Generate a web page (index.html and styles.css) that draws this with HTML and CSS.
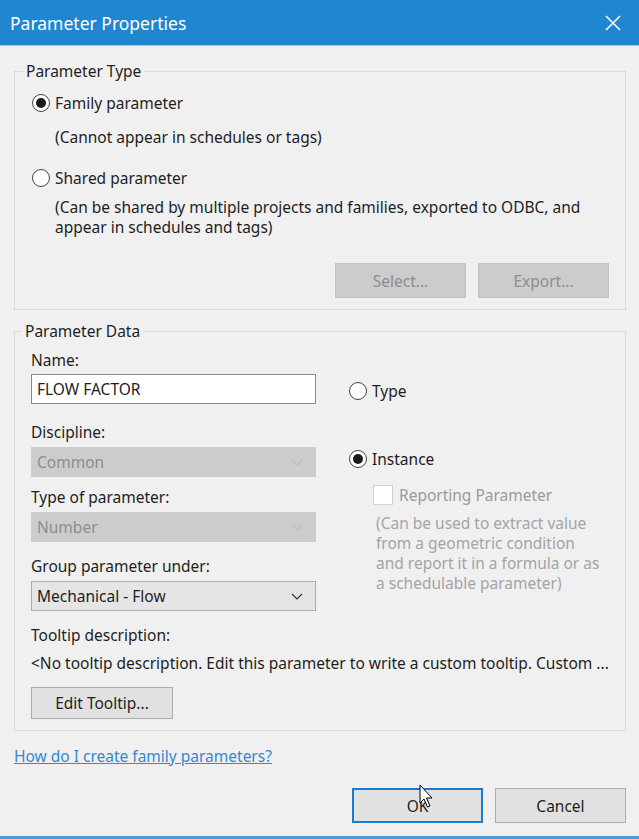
FILE: index.html
```html
<!DOCTYPE html>
<html lang="en">
<head>
<meta charset="UTF-8">
<title>Parameter Properties</title>
<link rel="stylesheet" href="styles.css">
</head>
<body>
<div class="dialog">
    <div class="titlebar">
        <span class="title">Parameter Properties</span>
        <svg class="close" width="18" height="18" viewBox="0 0 18 18">
            <path d="M2 2 L16 16 M16 2 L2 16" stroke="#fff" stroke-width="1.6" fill="none"/>
        </svg>
    </div>

    <div class="content">
        <fieldset class="group type-group">
            <legend>Parameter Type</legend>
            <div class="radio-row">
                <span class="radio checked"></span>
                <span>Family parameter</span>
            </div>
            <p class="hint hint-family">(Cannot appear in schedules or tags)</p>
            <div class="radio-row shared-row">
                <span class="radio"></span>
                <span>Shared parameter</span>
            </div>
            <p class="hint hint-shared">(Can be shared by multiple projects and families, exported to ODBC, and<br>appear in schedules and tags)</p>
            <div class="btn-row">
                <button class="btn disabled">Select...</button>
                <button class="btn disabled">Export...</button>
            </div>
        </fieldset>

        <fieldset class="group data-group">
            <legend>Parameter Data</legend>
            <div class="data-cols">
                <div class="left-col">
                    <div class="field-label name-label">Name:</div>
                    <div class="textbox">FLOW FACTOR</div>

                    <div class="field-label discipline-label">Discipline:</div>
                    <div class="combo disabled">
                        <span>Common</span>
                        <svg width="12" height="7" viewBox="0 0 12 7"><path d="M1 1 L6 6 L11 1" stroke="#bdbdbd" fill="none" stroke-width="1.2"/></svg>
                    </div>

                    <div class="field-label type-label">Type of parameter:</div>
                    <div class="combo disabled">
                        <span>Number</span>
                        <svg width="12" height="7" viewBox="0 0 12 7"><path d="M1 1 L6 6 L11 1" stroke="#bdbdbd" fill="none" stroke-width="1.2"/></svg>
                    </div>

                    <div class="field-label">Group parameter under:</div>
                    <div class="combo">
                        <span>Mechanical - Flow</span>
                        <svg width="12" height="7" viewBox="0 0 12 7"><path d="M1 1 L6 6 L11 1" stroke="#333" fill="none" stroke-width="1.2"/></svg>
                    </div>
                </div>

                <div class="right-col">
                    <div class="radio-row type-row">
                        <span class="radio"></span>
                        <span>Type</span>
                    </div>
                    <div class="radio-row instance-row">
                        <span class="radio checked"></span>
                        <span>Instance</span>
                    </div>
                    <div class="check-row">
                        <span class="checkbox"></span>
                        <span>Reporting Parameter</span>
                    </div>
                    <p class="check-hint">(Can be used to extract value<br>from a geometric condition<br>and report it in a formula or as<br>a schedulable parameter)</p>
                </div>
            </div>

            <div class="field-label tooltip-label">Tooltip description:</div>
            <div class="tooltip-text">&lt;No tooltip description. Edit this parameter to write a custom tooltip. Custom ...</div>
            <button class="btn edit-btn">Edit Tooltip...</button>
        </fieldset>

        <a class="help-link" href="#">How do I create family parameters?</a>

        <div class="footer">
            <div class="ok-wrap">
                <button class="btn ok">OK</button>
                <svg class="cursor" width="16" height="26" viewBox="0 0 16 26">
                    <path d="M1 1 L1 19 L5 15 L8.5 23 L11 22 L7.5 14 L13 14 Z" fill="#fff" stroke="#000" stroke-width="1"/>
                </svg>
            </div>
            <button class="btn">Cancel</button>
        </div>
    </div>
</div>
</body>
</html>
```

FILE: styles.css
```css
body {
    margin: 0;
    padding: 0;
    font-family: "Noto Sans", "Open Sans", sans-serif;
    font-size: 15.5px;
    line-height: 20px;
    color: #1e1e1e;
    background-color: #f0f0f0;
}
.dialog {
    width: 639px;
    height: 839px;
    box-sizing: border-box;
    background-color: #f0f0f0;
    border-bottom: 3px solid #4b9bd8;
}

/* Title bar */
.titlebar {
    height: 45px;
    background-color: #1f86d0;
    border-bottom: 1px solid #9cc8ea;
    display: flex;
    align-items: center;
    justify-content: space-between;
    padding: 0 17px 0 10px;
}
.title {
    color: #fff;
    font-size: 17.5px;
}

.content {
    padding: 15px 13px 0 14px;
}

/* Group boxes */
.group {
    margin: 0;
    border: 1px solid #dadada;
    padding: 2px 16px 11px 16px;
}
.group legend {
    padding: 0 3px;
    margin-left: -9px;
}
.type-group {
    padding-left: 17px;
}
.radio-row {
    display: flex;
    align-items: center;
    height: 20px;
    margin-top: 10px;
}
.radio {
    width: 16px;
    height: 16px;
    border: 1.5px solid #444;
    border-radius: 50%;
    background: #fff;
    margin-right: 5px;
    position: relative;
    flex-shrink: 0;
}
.radio.checked::after {
    content: "";
    position: absolute;
    left: 3px;
    top: 3px;
    width: 10px;
    height: 10px;
    border-radius: 50%;
    background: #1a1a1a;
}
.hint {
    margin: 14px 0 0 23px;
}
.hint-shared {
    margin-top: 9px;
}
.shared-row {
    margin-top: 21px;
}
.btn-row {
    display: flex;
    justify-content: flex-end;
    gap: 12px;
    margin-top: 26px;
}
.btn {
    font-family: inherit;
    font-size: 15.5px;
    width: 131px;
    height: 35px;
    background: #e1e1e1;
    border: 1px solid #adadad;
    color: #1e1e1e;
    padding: 0;
}
.btn.disabled {
    background: #cccccc;
    border-color: #c4c4c4;
    color: #8d8d8d;
}

/* Parameter data */
.data-group {
    margin-top: 11px;
    padding-bottom: 11px;
}
.data-cols {
    display: grid;
    grid-template-columns: 285px 1fr;
    column-gap: 33px;
}
.field-label {
    margin-top: 14px;
}
.name-label {
    margin-top: 7px;
}
.textbox {
    margin-top: 4px;
    height: 28px;
    border: 1px solid #8a8a8a;
    background: #fff;
    padding: 0 5px;
    line-height: 28px;
}
.discipline-label {
    margin-top: 18px;
}
.type-label {
    margin-top: 10px;
}
.combo {
    margin-top: 5px;
    height: 28px;
    border: 1px solid #adadad;
    background: #e5e5e5;
    padding: 0 12px 0 5px;
    display: flex;
    align-items: center;
    justify-content: space-between;
}
.combo.disabled {
    background: #cccccc;
    border-color: #cccccc;
    color: #8d8d8d;
}
.type-row {
    margin-top: 38px;
}
.instance-row {
    margin-top: 48px;
}
.check-row {
    display: flex;
    align-items: center;
    margin: 16px 0 0 24px;
    color: #9a9a9a;
}
.checkbox {
    width: 18px;
    height: 18px;
    border: 1px solid #d0d0d0;
    background: #fff;
    margin-right: 6px;
}
.check-hint {
    margin: 8px 0 0 27px;
    color: #a4a4a4;
}
.tooltip-label {
    margin-top: 14px;
}
.tooltip-text {
    margin-top: 8px;
}
.edit-btn {
    margin-top: 14px;
    width: 142px;
    height: 32px;
}

.help-link {
    display: block;
    margin-top: 15px;
    color: #2f8ad5;
}

.footer {
    display: flex;
    justify-content: flex-end;
    gap: 12px;
    margin-top: 22px;
}
.ok-wrap {
    position: relative;
}
.btn.ok {
    border: 2px solid #1a7ad6;
}
.cursor {
    position: absolute;
    left: 67px;
    top: -4px;
}
```
